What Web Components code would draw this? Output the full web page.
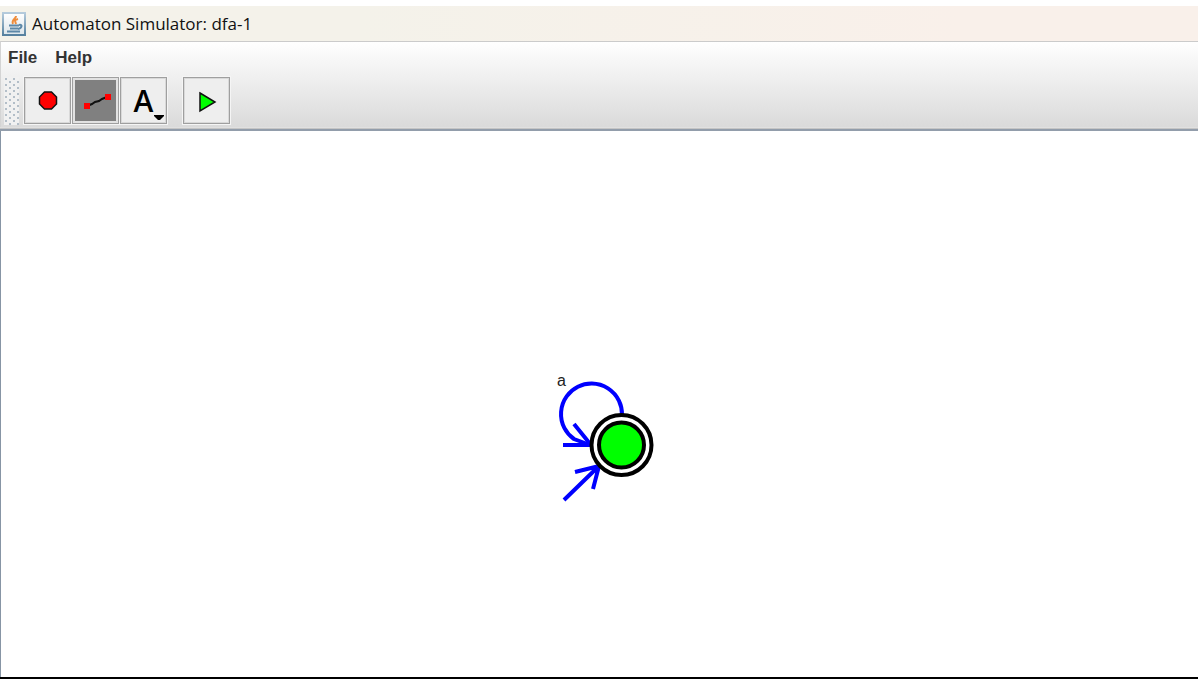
<!DOCTYPE html>
<html lang="en">
<head>
<meta charset="utf-8">
<title>Automaton Simulator: dfa-1</title>
<style>
  html, body { height: 100%; margin: 0; }
  body { background: #fff; font-family: "Liberation Sans", Arial, sans-serif; color: #333; }
</style>
</head>
<body>
<simulator-window>
  <title-bar slot="title">Automaton Simulator: dfa-1</title-bar>
  <menu-bar slot="chrome">
    <menu-item>File</menu-item>
    <menu-item>Help</menu-item>
  </menu-bar>
  <tool-bar slot="chrome">
    <tool-button label="State tool">
      <svg width="25" height="25" viewBox="0 0 25 25"><path d="M9.500 4h7l5 5v7l-5 5h-7l-5-5v-7z" fill="#f00" stroke="#111" stroke-width="1.500"/></svg>
    </tool-button>
    <tool-button label="Transition tool" pressed>
      <svg width="30" height="24" viewBox="0 0 30 24"><path d="M6 17l5-2 3-2 4-1 3-2 5-2" fill="none" stroke="#111" stroke-width="2"/><path d="M3 14h6v6H3zM24 5h6v6h-6z" fill="#f00"/></svg>
    </tool-button>
    <tool-button label="Alphabet" menu>A</tool-button>
    <tool-button label="Simulate" apart>
      <svg width="24" height="24" viewBox="0 0 24 24"><path d="M5 4L20 13L5 22z" fill="#0f0" stroke="#111" stroke-width="1.500"/></svg>
    </tool-button>
  </tool-bar>
  <automaton-canvas></automaton-canvas>
</simulator-window>

<script>
class Base extends HTMLElement {
  constructor() {
    super();
    this.attachShadow({ mode: "open" }).innerHTML = this.constructor.markup;
  }
}

customElements.define("simulator-window", class extends Base {
  static markup = `
    <style>
      :host { display: flex; flex-direction: column; box-sizing: border-box; min-height: 100%; padding-top: 6px; border-bottom: 2px solid #000; }
      .chrome { border-top: 1px solid #cbcbcb; border-left: 1px solid #d4d4d4; background: linear-gradient(#fff, #dadada); }
      .rule { height: 4px; box-sizing: border-box; background: #c5c5c5; border-top: 1px solid #e0e0e0; border-bottom: 2px solid #929dab; }
      main { display: flex; flex: 1; }
    </style>
    <slot name="title"></slot>
    <div class="chrome"><slot name="chrome"></slot></div>
    <div class="rule"></div>
    <main><slot></slot></main>`;
});

customElements.define("title-bar", class extends Base {
  static markup = `
    <style>
      :host { display: flex; align-items: center; gap: 6px; height: 35px; padding-left: 2px; background: linear-gradient(90deg, #f4f2ea 30%, #f9f0ea 80%); }
      h1 { margin: 0; font: 400 17px/24px "Open Sans", "Noto Sans", sans-serif; color: #111; }
    </style>
    <svg width="24" height="24" viewBox="0 0 24 24" aria-hidden="true">
      <defs><linearGradient id="g" x2="0" y2="1"><stop stop-color="#b5cbdc"/><stop offset="1" stop-color="#56819f"/></linearGradient>
      <linearGradient id="p" x2="0" y2="1"><stop stop-color="#fff"/><stop offset="1" stop-color="#dce5ea"/></linearGradient></defs>
      <rect x="1" y="1" width="22" height="22" fill="url(#p)" stroke="url(#g)" stroke-width="2"/>
      <path d="M14 4c0 3-5 4-3 8M16 7c-4 1-3 2-2 5" fill="none" stroke="#ee8d3c" stroke-width="2"/>
      <path d="M7 13.500h10M8 16.500h8M5 19.500h13M17 13c4-1 3 3-1 4" fill="none" stroke="#5d88a7" stroke-width="2"/>
    </svg>
    <h1><slot></slot></h1>`;
});

customElements.define("menu-bar", class extends Base {
  static markup = `
    <style>:host { display: flex; gap: 18px; height: 32px; padding-left: 7px; }</style>
    <slot></slot>`;
});

customElements.define("menu-item", class extends Base {
  static markup = `
    <style>
      :host { display: block; }
      button { display: block; padding: 0; border: 0; background: none; color: #333; font: bold 17px/31px "Liberation Sans", Arial, sans-serif; }
    </style>
    <button type="button"><slot></slot></button>`;
});

customElements.define("tool-bar", class extends Base {
  static markup = `
    <style>
      :host { display: flex; align-items: center; gap: 1px; height: 53px; padding-left: 3px; }
      .grip { width: 15px; height: 48px; margin-right: 4px;
        background: conic-gradient(from 90deg at 6px 4px, #b3bec8 90deg, transparent 0) -5px -3px / 8px 6px,
                    conic-gradient(from 90deg at 6px 4px, #b3bec8 90deg, transparent 0) -1px 0 / 8px 6px, #f1f1f1; }
    </style>
    <div class="grip"></div><slot></slot>`;
});

customElements.define("tool-button", class extends Base {
  static markup = `
    <style>
      :host { display: block; }
      :host([apart]) { margin-left: 15px; }
      button { position: relative; display: grid; place-items: center; box-sizing: border-box; width: 47px; height: 47px; padding: 0;
        border: 1px solid #9f9f9f; box-shadow: inset 0 0 0 1px #d9d9d9, 0 0 0 1px #f5f5f5; background: #eee; color: #000; font: 600 30px/40px "Open Sans", "Noto Sans", sans-serif; }
      :host([pressed]) button { background: #808080; box-shadow: inset 0 0 0 2px #e2e2e2, 0 0 0 1px #f5f5f5; }
      .arrow { display: none; position: absolute; right: 2px; bottom: 3px; }
      :host([menu]) .arrow { display: block; }
    </style>
    <button type="button"><slot></slot><svg class="arrow" width="10" height="5" viewBox="0 0 10 5" aria-hidden="true"><path d="M0 0h10v1L6 5H4L0 1z"/></svg></button>`;
  connectedCallback() {
    const button = this.shadowRoot.querySelector("button");
    button.setAttribute("aria-label", this.getAttribute("label"));
    button.setAttribute("aria-pressed", this.hasAttribute("pressed"));
  }
});

customElements.define("automaton-canvas", class extends Base {
  static markup = `
    <style>
      :host { display: block; position: relative; flex: 1; background: #fff; border-left: 1px solid #8795a5; overflow: hidden; }
      svg { position: absolute; left: 549px; top: 239px; }
      text { font: 16px "Liberation Sans", Arial, sans-serif; fill: #222; }
    </style>
    <svg width="110" height="140" viewBox="550 370 110 140" role="img" aria-label="Accepting start state with a loop on a">
      <g fill="none" stroke="#00f" stroke-width="4">
        <path d="M622 415A30.500 30.500 0 1 0 574 439L590 445"/>
        <path d="M563 445h28L574 424M564 500L599 466M575 472l24-6l-6 23"/>
      </g>
      <circle cx="621.500" cy="445" r="30" fill="#fff" stroke="#000" stroke-width="4"/>
      <circle cx="621.500" cy="445" r="22.500" fill="#0f0" stroke="#000" stroke-width="4"/>
      <text x="557" y="386">a</text>
    </svg>`;
});
</script>
</body>
</html>
